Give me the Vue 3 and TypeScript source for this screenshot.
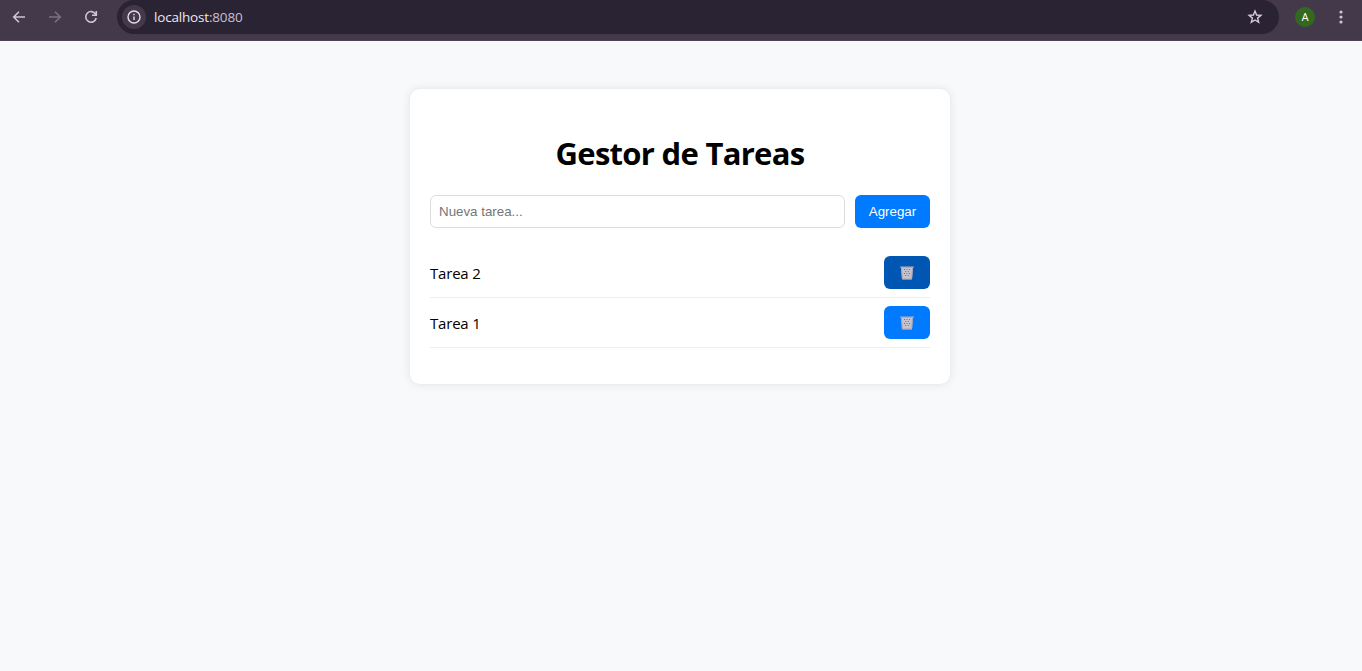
<script setup lang="ts">
import { ref } from 'vue'

interface Task {
  id: number
  title: string
  active: boolean
}

const draft = ref('')
const tasks = ref<Task[]>([
  { id: 2, title: 'Tarea 2', active: true },
  { id: 1, title: 'Tarea 1', active: false },
])

function addTask(): void {
  const title = draft.value.trim()
  if (!title) return
  tasks.value.unshift({ id: Date.now(), title, active: false })
  draft.value = ''
}

function removeTask(id: number): void {
  tasks.value = tasks.value.filter((t) => t.id !== id)
}
</script>

<template>
  <div class="window">
    <header class="toolbar">
      <svg class="nav" viewBox="0 0 16 16"><path d="M14 8H3M8 2.7 2.7 8 8 13.3" /></svg>
      <svg class="nav dim" viewBox="0 0 16 16"><path d="M2 8h11M8 2.7 13.3 8 8 13.3" /></svg>
      <svg class="nav" viewBox="0 0 16 16"><path d="M12.6 5.2A5.3 5.3 0 1 0 13.2 9M13.3 2v4.3H9" /></svg>
      <div class="address">
        <span class="info">
          <svg viewBox="0 0 16 16"><circle cx="8" cy="8" r="6" /><path d="M8 7.4v3.7M8 4.7v1.5" /></svg>
        </span>
        <span class="url">localhost<span class="port">:8080</span></span>
        <svg class="star" viewBox="0 0 16 16"><path d="M8 2.1 9.6 6l4.3.3-3.3 2.8 1.1 4.2L8 11l-3.7 2.3 1.1-4.2L2.1 6.3 6.4 6z" /></svg>
      </div>
      <span class="avatar">A</span>
      <svg class="menu" viewBox="0 0 4 16"><circle cx="2" cy="3" r="1.6" /><circle cx="2" cy="8" r="1.6" /><circle cx="2" cy="13" r="1.6" /></svg>
    </header>

    <main class="page">
      <section class="card">
        <h1>Gestor de Tareas</h1>
        <form class="entry" @submit.prevent="addTask">
          <input v-model="draft" type="text" placeholder="Nueva tarea..." />
          <button class="add" type="submit">Agregar</button>
        </form>
        <ul>
          <li v-for="task in tasks" :key="task.id">
            <span class="title">{{ task.title }}</span>
            <button class="remove" :class="{ active: task.active }" type="button" aria-label="Eliminar" @click="removeTask(task.id)">
              <svg viewBox="0 0 14 14">
                <path class="bin" d="M1 1.2h12l-1 12H2z" />
                <path class="holes" d="M4 3.5h1M6.5 3.5h1M9 3.5h1M5.2 5.5h1M7.8 5.5h1M4 7.5h1M6.5 7.5h1M9 7.5h1M5.2 9.5h1M7.8 9.5h1" />
                <path class="rim" d="M.2 1.2h13.6M2.2 12.8h9.6" />
                <path class="side" d="M1.5 2l.9 10.6M12.5 2l-.9 10.6" />
              </svg>
            </button>
          </li>
        </ul>
      </section>
    </main>
  </div>
</template>

<style>
body {
  margin: 0;
  background: #f8f9fb;
}
</style>

<style scoped>
.window {
  height: 671px;
  overflow: hidden;
  display: flex;
  flex-direction: column;
  background: #f8f9fb;
  font-family: "Open Sans", "Noto Sans", sans-serif;
}
.toolbar {
  box-sizing: border-box;
  height: 41px;
  flex: none;
  display: flex;
  align-items: center;
  padding: 0 19px 7px 11px;
  background: #43394b;
  border-bottom: 1px solid #4d4454;
}
.nav {
  width: 16px;
  height: 16px;
  margin-right: 20px;
  fill: none;
  stroke: #d0c4d6;
  stroke-width: 1.6;
}
.nav.dim {
  stroke: #7b7083;
}
.address {
  box-sizing: border-box;
  width: 1162px;
  height: 34px;
  margin-left: -2px;
  padding: 0 16px 0 5px;
  display: flex;
  align-items: center;
  border-radius: 17px;
  background: #2a2333;
}
.info {
  width: 24px;
  height: 24px;
  display: grid;
  place-items: center;
  border-radius: 50%;
  background: #43394b;
}
.info svg {
  width: 16px;
  height: 16px;
  fill: none;
  stroke: #e5dce9;
  stroke-width: 1.4;
}
.url {
  margin-left: 8px;
  flex: 1;
  font-size: 13.5px;
  line-height: 20px;
  letter-spacing: -0.18px;
  color: #eee6f2;
}
.port {
  color: #c9bfce;
}
.star {
  width: 16px;
  height: 16px;
  fill: none;
  stroke: #d6cbdc;
  stroke-width: 1.4;
}
.avatar {
  width: 20px;
  height: 20px;
  margin-left: 16px;
  border-radius: 50%;
  background: #33691e;
  color: #fff;
  font: 400 11px/21px Roboto, sans-serif;
  text-align: center;
}
.menu {
  width: 4px;
  height: 16px;
  margin-left: 24px;
  fill: #d0c4d6;
}
.page {
  flex: 1;
  padding-top: 48px;
}
.card {
  box-sizing: border-box;
  width: 540px;
  height: 295px;
  margin-left: 410px;
  padding: 43px 20px 0;
  border-radius: 10px;
  background: #fff;
  box-shadow: 0 0 10px rgba(0, 0, 0, 0.1);
}
h1 {
  margin: 0 0 20px;
  font-size: 31px;
  line-height: 43px;
  font-weight: 700;
  letter-spacing: -0.7px;
  text-align: center;
  color: #000;
}
.entry {
  display: flex;
  gap: 10px;
}
input {
  box-sizing: border-box;
  flex: 1;
  min-width: 0;
  height: 33px;
  padding: 0 8px;
  border: 1px solid #dcdcdc;
  border-radius: 6px;
  background: #fff;
  font: 13.333px "Liberation Sans", Arial, sans-serif;
  outline: none;
}
input::placeholder {
  color: #757575;
}
button {
  height: 33px;
  padding: 0;
  border: 0;
  border-radius: 6px;
  background: #007bff;
  color: #fff;
  font: 13.333px "Liberation Sans", Arial, sans-serif;
}
.add {
  width: 75px;
}
ul {
  margin: 20px 0 0;
  padding: 0;
  list-style: none;
}
li {
  box-sizing: border-box;
  height: 50px;
  padding: 8px 0;
  display: flex;
  justify-content: space-between;
  border-bottom: 1px solid #eee;
}
.title {
  font-size: 15px;
  line-height: 35px;
  letter-spacing: -0.2px;
  color: #000;
}
.remove {
  width: 46px;
  display: grid;
  place-items: center;
}
.remove.active {
  background: #0056b3;
}
.remove svg {
  width: 14px;
  height: 14px;
  margin-top: 1px;
  fill: none;
}
.bin {
  fill: #c6c2ce;
}
.holes {
  stroke: #3f7fd0;
  stroke-width: 1;
}
.rim {
  stroke: #b9aeb3;
  stroke-width: 1.2;
}
.side {
  stroke: #aaa4b2;
  stroke-width: 0.9;
}
</style>
